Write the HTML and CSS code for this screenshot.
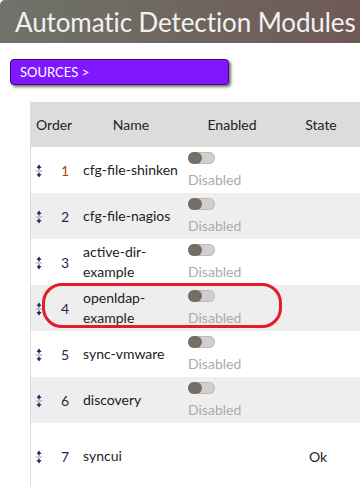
FILE: index.html
```html
<!DOCTYPE html>
<html lang="en">
<head>
<meta charset="UTF-8">
<title>Automatic Detection Modules</title>
<link rel="stylesheet" href="styles.css">
</head>
<body>
  <div class="page-title">Automatic Detection Modules</div>

  <div class="bar">
    <a class="crumb" href="#">SOURCES &gt;</a>
  </div>

  <div class="table-wrap">
    <table class="modules">
      <thead>
        <tr>
          <th class="col-order">Order</th>
          <th class="col-name">Name</th>
          <th class="col-enabled">Enabled</th>
          <th class="col-state">State</th>
        </tr>
      </thead>
      <tbody>
        <tr>
          <td class="col-order"><span class="move"><svg width="6" height="14" viewBox="0 0 6 14"><path d="M3 0.5 L5.5 4 H3.7 V5.5 H2.3 V4 H0.5 Z" fill="#1a2a6a"/><rect x="0" y="6.5" width="6" height="1" fill="#9a9a9a"/><path d="M3 13.5 L5.5 10 H3.7 V8.5 H2.3 V10 H0.5 Z" fill="#1a2a6a"/></svg></span><span class="num first">1</span></td>
          <td class="col-name">cfg-file-shinken</td>
          <td class="col-enabled"><span class="toggle"></span><div class="status">Disabled</div></td>
          <td class="col-state"></td>
        </tr>
        <tr>
          <td class="col-order"><span class="move"><svg width="6" height="14" viewBox="0 0 6 14"><path d="M3 0.5 L5.5 4 H3.7 V5.5 H2.3 V4 H0.5 Z" fill="#1a2a6a"/><rect x="0" y="6.5" width="6" height="1" fill="#9a9a9a"/><path d="M3 13.5 L5.5 10 H3.7 V8.5 H2.3 V10 H0.5 Z" fill="#1a2a6a"/></svg></span><span class="num">2</span></td>
          <td class="col-name">cfg-file-nagios</td>
          <td class="col-enabled"><span class="toggle"></span><div class="status">Disabled</div></td>
          <td class="col-state"></td>
        </tr>
        <tr>
          <td class="col-order"><span class="move"><svg width="6" height="14" viewBox="0 0 6 14"><path d="M3 0.5 L5.5 4 H3.7 V5.5 H2.3 V4 H0.5 Z" fill="#1a2a6a"/><rect x="0" y="6.5" width="6" height="1" fill="#9a9a9a"/><path d="M3 13.5 L5.5 10 H3.7 V8.5 H2.3 V10 H0.5 Z" fill="#1a2a6a"/></svg></span><span class="num">3</span></td>
          <td class="col-name">active-dir-example</td>
          <td class="col-enabled"><span class="toggle"></span><div class="status">Disabled</div></td>
          <td class="col-state"></td>
        </tr>
        <tr>
          <td class="col-order"><span class="move"><svg width="6" height="14" viewBox="0 0 6 14"><path d="M3 0.5 L5.5 4 H3.7 V5.5 H2.3 V4 H0.5 Z" fill="#1a2a6a"/><rect x="0" y="6.5" width="6" height="1" fill="#9a9a9a"/><path d="M3 13.5 L5.5 10 H3.7 V8.5 H2.3 V10 H0.5 Z" fill="#1a2a6a"/></svg></span><span class="num">4</span><span class="highlight"></span></td>
          <td class="col-name">openldap-example</td>
          <td class="col-enabled"><span class="toggle"></span><div class="status">Disabled</div></td>
          <td class="col-state"></td>
        </tr>
        <tr>
          <td class="col-order"><span class="move"><svg width="6" height="14" viewBox="0 0 6 14"><path d="M3 0.5 L5.5 4 H3.7 V5.5 H2.3 V4 H0.5 Z" fill="#1a2a6a"/><rect x="0" y="6.5" width="6" height="1" fill="#9a9a9a"/><path d="M3 13.5 L5.5 10 H3.7 V8.5 H2.3 V10 H0.5 Z" fill="#1a2a6a"/></svg></span><span class="num">5</span></td>
          <td class="col-name">sync-vmware</td>
          <td class="col-enabled"><span class="toggle"></span><div class="status">Disabled</div></td>
          <td class="col-state"></td>
        </tr>
        <tr>
          <td class="col-order"><span class="move"><svg width="6" height="14" viewBox="0 0 6 14"><path d="M3 0.5 L5.5 4 H3.7 V5.5 H2.3 V4 H0.5 Z" fill="#1a2a6a"/><rect x="0" y="6.5" width="6" height="1" fill="#9a9a9a"/><path d="M3 13.5 L5.5 10 H3.7 V8.5 H2.3 V10 H0.5 Z" fill="#1a2a6a"/></svg></span><span class="num">6</span></td>
          <td class="col-name">discovery</td>
          <td class="col-enabled"><span class="toggle"></span><div class="status">Disabled</div></td>
          <td class="col-state"></td>
        </tr>
        <tr class="tall">
          <td class="col-order"><span class="move"><svg width="6" height="14" viewBox="0 0 6 14"><path d="M3 0.5 L5.5 4 H3.7 V5.5 H2.3 V4 H0.5 Z" fill="#1a2a6a"/><rect x="0" y="6.5" width="6" height="1" fill="#9a9a9a"/><path d="M3 13.5 L5.5 10 H3.7 V8.5 H2.3 V10 H0.5 Z" fill="#1a2a6a"/></svg></span><span class="num">7</span></td>
          <td class="col-name">syncui</td>
          <td class="col-enabled"></td>
          <td class="col-state">Ok</td>
        </tr>
      </tbody>
    </table>
  </div>
</body>
</html>
```

FILE: styles.css
```css
body {
  margin: 0;
  font-family: Lato, "Liberation Sans", Arial, sans-serif;
  background-color: #fff;
  color: #222;
  overflow: hidden;
}
.page-title {
  height: 43px;
  line-height: 44px;
  padding-left: 15px;
  font-size: 26px;
  letter-spacing: -0.1px;
  color: #f2f2f2;
  white-space: nowrap;
  overflow: hidden;
  border-top-left-radius: 5px;
  background: linear-gradient(to right, #6f7369, #6f5957);
}
.bar {
  padding: 16px 0 0 10px;
}
.crumb {
  display: block;
  width: 208px;
  height: 24px;
  line-height: 24px;
  padding-left: 9px;
  font-size: 13px;
  color: #fff;
  text-decoration: none;
  background-color: #7f18ff;
  border: 1px solid #3c0c70;
  border-radius: 4px;
  box-shadow: 2px 2px 3px rgba(0, 0, 0, 0.55);
}
.table-wrap {
  margin: 15px 0 0 30px;
  border-left: 1px solid #ddd;
  padding-top: 2px;
  width: 329px;
}
.modules {
  border-collapse: collapse;
  table-layout: fixed;
  width: 329px;
  font-size: 14px;
}
.modules th {
  height: 45px;
  font-weight: normal;
  background-color: #dcdcdc;
  color: #222;
  padding: 0;
}
.modules td {
  height: 46px;
  padding: 0;
  vertical-align: middle;
}
.modules tbody tr:nth-child(even) {
  background-color: #eee;
}
.col-order {
  width: 44px;
}
.col-name {
  width: 102px;
}
.col-enabled {
  width: 100px;
}
th.col-order {
  text-align: left;
  padding-left: 5px;
}
th.col-name,
th.col-enabled,
th.col-state {
  text-align: center;
}
td.col-order {
  padding-left: 5px;
  position: relative;
  white-space: nowrap;
}
.move {
  display: inline-block;
  vertical-align: middle;
  line-height: 0;
}
.num {
  display: inline-block;
  width: 27px;
  text-align: right;
  vertical-align: middle;
  color: #1f2a50;
}
.num.first {
  color: #a84a10;
}
td.col-name {
  padding-left: 3px;
  line-height: 20px;
  color: #222;
}
td.col-enabled {
  padding-left: 6px;
  vertical-align: top;
}
.toggle {
  display: block;
  position: relative;
  margin-top: 5px;
  width: 27px;
  height: 12px;
  border-radius: 6px;
  background-color: #cfcfcf;
  box-shadow: inset 0 0 0 1px #bbb;
}
.toggle::before {
  content: "";
  position: absolute;
  left: 0;
  top: 0;
  width: 14px;
  height: 12px;
  border-radius: 6px;
  background-color: #746e67;
}
.status {
  margin-top: 6px;
  line-height: 20px;
  color: #b0aaa8;
}
td.col-state {
  padding-left: 27px;
}
.tall td {
  height: 66px;
}
.highlight {
  position: absolute;
  left: 11px;
  top: -2px;
  width: 234px;
  height: 39px;
  border: 3px solid #e31b2a;
  border-radius: 20px;
  pointer-events: none;
}
```
